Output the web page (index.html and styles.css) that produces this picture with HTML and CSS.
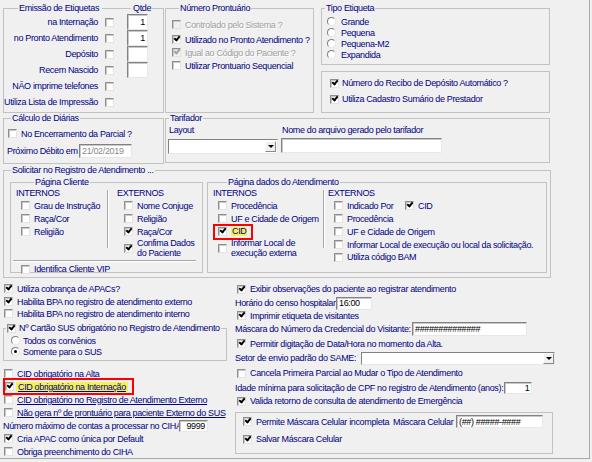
FILE: index.html
```html
<!DOCTYPE html>
<html lang="pt-BR">
<head>
    <meta charset="UTF-8">
    <title>Parâmetros de Atendimento</title>
    <link rel="stylesheet" href="styles.css">
</head>
<body>
<div class="form">
    <div class="upper">
        <div class="col-a">
            <fieldset class="group emissao">
                <legend class="lg-emissao"><span>Emissão de Etiquetas</span><span class="lg-line"></span><span>Qtde</span></legend>
                <div class="et-rows">
                    <div class="et-row"><span class="et-label">na Internação</span><span class="cb"></span><span class="edit num">1</span></div>
                    <div class="et-row"><span class="et-label">no Pronto Atendimento</span><span class="cb"></span><span class="edit num">1</span></div>
                    <div class="et-row"><span class="et-label">Depósito</span><span class="cb"></span><span class="edit num"></span></div>
                    <div class="et-row"><span class="et-label">Recem Nascido</span><span class="cb"></span><span class="edit num"></span></div>
                    <div class="et-row"><span class="et-label">NÃO imprime telefones</span><span class="cb"></span></div>
                    <div class="et-row"><span class="et-label">Utiliza Lista de Impressão</span><span class="cb"></span></div>
                </div>
            </fieldset>
            <fieldset class="group calculo">
                <legend class="lg-calculo">Cálculo de Diárias</legend>
                <div class="calc-body">
                    <div class="chk"><span class="cb"></span>No Encerramento da Parcial ?</div>
                    <div class="calc-row"><span class="calc-label">Próximo Débito em</span><span class="edit date">21/02/2019</span></div>
                </div>
            </fieldset>
        </div>
        <div class="col-r">
            <div class="row-top">
                <fieldset class="group prontuario">
                    <legend class="lg-prontuario">Número Prontuário</legend>
                    <div class="pr-body">
                        <div class="chk pr-first dis"><span class="cb dis"></span>Controlado pelo Sistema ?</div>
                        <div class="chk"><span class="cb on"></span>Utilizado no Pronto Atendimento ?</div>
                        <div class="chk dis"><span class="cb dis on"></span>Igual ao Código do Paciente ?</div>
                        <div class="chk"><span class="cb"></span>Utilizar Prontuario Sequencial</div>
                    </div>
                </fieldset>
                <div class="col-c">
                    <fieldset class="group tipo">
                        <legend class="lg-tipo">Tipo Etiqueta</legend>
                        <div class="tipo-body">
                            <div class="rad"><span class="rb"></span>Grande</div>
                            <div class="rad"><span class="rb"></span>Pequena</div>
                            <div class="rad"><span class="rb"></span>Pequena-M2</div>
                            <div class="rad"><span class="rb"></span>Expandida</div>
                        </div>
                    </fieldset>
                    <fieldset class="group recibo">
                        <div class="recibo-body">
                            <div class="chk"><span class="cb on"></span>Número do Recibo de Depósito Automático ?</div>
                            <div class="chk"><span class="cb on"></span>Utiliza Cadastro Sumário de Prestador</div>
                        </div>
                    </fieldset>
                </div>
            </div>
            <fieldset class="group tarifador">
                <legend class="lg-tarifador">Tarifador</legend>
                <div class="tar-body">
                    <span class="tar-label">Layout</span>
                    <span class="tar-label">Nome do arquivo gerado pelo tarifador</span>
                    <span class="combo"><span class="combo-btn"></span></span>
                    <span class="edit"></span>
                </div>
            </fieldset>
        </div>
    </div>

    <fieldset class="group solicitar">
        <legend class="lg-solicitar">Solicitar no Registro de Atendimento ...</legend>
        <div class="sol-body">
            <fieldset class="group pagina cliente">
                <legend class="lg-cliente">Página Cliente</legend>
                <div class="pg-body">
                    <div class="pg-cols">
                        <div class="pg-col cli-int">
                            <div class="hdr">INTERNOS</div>
                            <div class="sr in5"><span class="cb"></span>Grau de Instrução</div>
                            <div class="sr in5"><span class="cb"></span>Raça/Cor</div>
                            <div class="sr in5"><span class="cb"></span>Religião</div>
                        </div>
                        <div class="vsep"></div>
                        <div class="pg-col cli-ext">
                            <div class="hdr">EXTERNOS</div>
                            <div class="sr in7"><span class="cb"></span>Nome Conjuge</div>
                            <div class="sr in7"><span class="cb"></span>Religião</div>
                            <div class="sr in7"><span class="cb on"></span>Raça/Cor</div>
                            <div class="sr in7 two"><span class="cb on"></span><span>Confima Dados<br>do Paciente</span></div>
                        </div>
                    </div>
                    <div class="hline"></div>
                    <div class="sr in5 vip"><span class="cb"></span>Identifica Cliente VIP</div>
                </div>
            </fieldset>
            <fieldset class="group pagina dados">
                <legend class="lg-dados">Página dados do Atendimento</legend>
                <div class="pg-body">
                    <div class="pg-cols">
                        <div class="pg-col dad-int">
                            <div class="hdr">INTERNOS</div>
                            <div class="sr in5"><span class="cb"></span>Procedência</div>
                            <div class="sr in5"><span class="cb"></span>UF e Cidade de Origem</div>
                            <div class="sr in5"><span class="redbox cid-int"><span class="cb on"></span><span class="hl">CID</span></span></div>
                            <div class="sr in5 two"><span class="cb"></span><span>Informar Local de<br>execução externa</span></div>
                        </div>
                        <div class="vsep"></div>
                        <div class="pg-col dad-ext">
                            <div class="hdr">EXTERNOS</div>
                            <div class="sr in6"><span class="cb"></span><span class="ind-label">Indicado Por</span><span class="cb on"></span>CID</div>
                            <div class="sr in6"><span class="cb"></span>Procedência</div>
                            <div class="sr in6"><span class="cb"></span>UF e Cidade de Origem</div>
                            <div class="sr in6"><span class="cb"></span>Informar Local de execução ou local da solicitação.</div>
                            <div class="sr in6 short"><span class="cb"></span>Utiliza código BAM</div>
                        </div>
                    </div>
                </div>
            </fieldset>
        </div>
    </fieldset>

    <div class="lower">
        <div class="low-left">
            <div class="chk"><span class="cb on"></span>Utiliza cobrança de APACs?</div>
            <div class="chk"><span class="cb on"></span>Habilita BPA no registro de atendimento externo</div>
            <div class="chk h11"><span class="cb"></span>Habilita BPA no registro de atendimento interno</div>
            <fieldset class="group sus">
                <legend class="lg-sus"><span class="cb on"></span>Nº Cartão SUS obrigatório no Registro de Atendimento</legend>
                <div class="sus-body">
                    <div class="rad"><span class="rb"></span>Todos os convênios</div>
                    <div class="rad"><span class="rb on"></span>Somente para o SUS</div>
                </div>
            </fieldset>
            <div class="chk cid-first"><span class="cb"></span><span class="ul">CID obrigatório na Alta</span></div>
            <div class="chk"><span class="redbox cid-intern"><span class="cb on"></span><span class="hl ul">CID obrigatório na Internação</span></span></div>
            <div class="chk"><span class="cb"></span><span class="ul">CID obrigatório no Registro de Atendimento Externo</span></div>
            <div class="chk"><span class="cb"></span><span class="ul">Não gera nº de prontuário para paciente Externo do SUS</span></div>
            <div class="field"><span class="ciha-label">Número máximo de contas a processar no CIHA:</span><span class="edit num ciha">9999</span></div>
            <div class="chk"><span class="cb on"></span>Cria APAC como única por Default</div>
            <div class="chk"><span class="cb"></span>Obriga preenchimento do CIHA</div>
        </div>
        <div class="low-right">
            <div class="chk h14"><span class="cb on"></span>Exibir observações do paciente ao registrar atendimento</div>
            <div class="field h14"><span class="lbl-horario">Horário do censo hospitalar:</span><span class="edit hora">16:00</span></div>
            <div class="chk h11"><span class="cb on"></span>Imprimir etiqueta de visitantes</div>
            <div class="field h16"><span class="lbl-credencial">Máscara do Número da Credencial do Visitante:</span><span class="edit credencial">##############</span></div>
            <div class="chk"><span class="cb on"></span>Permitir digitação de Data/Hora no momento da Alta.</div>
            <div class="field h16"><span class="lbl-setor">Setor de envio padrão do SAME:</span><span class="combo setor"><span class="combo-btn"></span></span></div>
            <div class="chk h14"><span class="cb"></span>Cancela Primeira Parcial ao Mudar o Tipo de Atendimento</div>
            <div class="field h15"><span class="lbl-idade">Idade mínima para solicitação de CPF no registro de Atendimento (anos):</span><span class="edit num idade">1</span></div>
            <div class="chk h12"><span class="cb on"></span>Valida retorno de consulta de atendimento de Emergência</div>
            <fieldset class="group celular">
                <div class="cel-row">
                    <div class="chk cel-chk"><span class="cb on"></span>Permite Máscara Celular incompleta</div>
                    <span class="lbl-cel">Máscara Celular</span>
                    <span class="edit cel">(##) #####-####</span>
                </div>
                <div class="chk cel-second"><span class="cb on"></span>Salvar Máscara Celular</div>
            </fieldset>
        </div>
    </div>
</div>
</body>
</html>
```

FILE: styles.css
```css
* {
    box-sizing: border-box;
}
body {
    margin: 0;
    background-color: #f0f0f0;
    font-family: "Liberation Sans", Arial, sans-serif;
    font-size: 9px;
    letter-spacing: -0.35px;
    color: #000080;
}
.form {
    width: 590px;
    height: 459px;
    padding: 3px 0 0 3px;
    border-right: 1px solid #a8a8a8;
    border-bottom: 1px solid #a8a8a8;
}

/* group boxes */
.group {
    margin: 0;
    padding: 0;
    min-width: 0;
    border: 1px solid #c2c2c2;
}
legend {
    padding: 0 1px;
    height: 10px;
    line-height: 10px;
    white-space: nowrap;
}
.lg-line {
    display: inline-block;
    width: 29px;
    height: 1px;
    margin: 0 2px 0 3px;
    background-color: #c2c2c2;
}
.lg-emissao {
    display: flex;
    align-items: center;
    margin-left: 14px;
}
.lg-calculo { margin-left: 7px; }
.lg-prontuario { margin-left: 13px; }
.lg-tipo { margin-left: 3px; }
.lg-tarifador { margin-left: 3px; }
.lg-solicitar { margin-left: 7px; }
.lg-cliente { margin-left: 23px; }
.lg-dados { margin-left: 19px; }
.lg-sus {
    display: flex;
    align-items: center;
    gap: 3px;
    margin-left: 2px;
}

/* controls */
.cb {
    position: relative;
    display: inline-block;
    flex: none;
    width: 9px;
    height: 9px;
    background-color: #fff;
    border: 1px solid;
    border-color: #8e8e8e #e3e3e3 #e3e3e3 #8e8e8e;
    box-shadow: inset 1px 1px 0 #c9c9c9;
}
.cb.on::after {
    content: "";
    position: absolute;
    left: 1px;
    top: 0;
    width: 4px;
    height: 2px;
    border-left: 2px solid #000;
    border-bottom: 2px solid #000;
    transform: rotate(-50deg);
}
.cb.dis {
    background-color: #f0f0f0;
}
.cb.dis.on::after {
    border-color: #a0a0a0;
}
.rb {
    position: relative;
    display: inline-block;
    flex: none;
    width: 9px;
    height: 9px;
    border-radius: 50%;
    background-color: #fff;
    border: 1px solid;
    border-color: #7e7e7e #e6e6e6 #e6e6e6 #7e7e7e;
}
.rb.on::after {
    content: "";
    position: absolute;
    left: 2px;
    top: 2px;
    width: 3px;
    height: 3px;
    border-radius: 50%;
    background-color: #000;
}
.edit {
    display: flex;
    align-items: center;
    flex: none;
    background-color: #fff;
    border: 1px solid;
    border-color: #828282 #e8e8e8 #e8e8e8 #828282;
    box-shadow: inset 1px 1px 0 #c8c8c8;
    padding: 0 2px;
    color: #000;
    white-space: nowrap;
    overflow: hidden;
}
.edit.num {
    justify-content: flex-end;
}
.combo {
    display: flex;
    justify-content: flex-end;
    flex: none;
    padding: 1px;
    background-color: #fff;
    border: 1px solid;
    border-color: #828282 #e8e8e8 #e8e8e8 #828282;
}
.combo-btn {
    display: flex;
    align-items: center;
    justify-content: center;
    width: 11px;
    background-color: #f0f0f0;
    border: 1px solid;
    border-color: #fff #8a8a8a #8a8a8a #fff;
}
.combo-btn::after {
    content: "";
    border-left: 3px solid transparent;
    border-right: 3px solid transparent;
    border-top: 3px solid #000;
}
.chk {
    display: flex;
    align-items: center;
    gap: 4px;
    height: 13px;
    white-space: nowrap;
}
.rad {
    display: flex;
    align-items: center;
    gap: 5px;
    height: 11px;
    white-space: nowrap;
}
.field {
    display: flex;
    align-items: center;
    white-space: nowrap;
}
.dis {
    color: #a0a0a0;
    text-shadow: 1px 1px 0 #fff;
}
.ul {
    text-decoration: underline;
}
.hl {
    background-color: #f3f05a;
}
.redbox {
    display: inline-flex;
    align-items: center;
    flex: none;
    border: 2px solid #f00;
}

/* upper area */
.upper {
    display: flex;
    align-items: flex-start;
}
.col-a {
    width: 161px;
}
.emissao {
    height: 110px;
}
.et-rows {
    padding-top: 1px;
}
.et-row {
    display: flex;
    align-items: center;
    height: 16px;
}
.et-label {
    width: 96px;
    padding-right: 2px;
    text-align: right;
    white-space: nowrap;
}
.et-row .cb {
    margin-left: 5px;
}
.et-row .edit {
    margin-left: 13px;
    width: 21px;
    height: 16px;
}
.calculo {
    height: 51px;
}
.calc-body {
    padding: 4px 0 0 4px;
}
.calc-row {
    display: flex;
    align-items: center;
    height: 14px;
    margin: 4px 0 0 -1px;
}
.calc-label {
    width: 72px;
    white-space: nowrap;
}
.edit.date {
    width: 53px;
    height: 14px;
    color: #8a8a8a;
}
.col-r {
    width: 385px;
    margin-left: 1px;
}
.row-top {
    display: flex;
    align-items: flex-start;
}
.prontuario {
    width: 149px;
    height: 110px;
}
.pr-body {
    padding: 5px 0 0 6px;
}
.pr-first {
    margin-bottom: 2px;
}
.col-c {
    width: 229px;
    margin-left: 7px;
}
.tipo {
    height: 62px;
}
.tipo-body {
    padding: 3px 0 0 5px;
}
.recibo {
    height: 42px;
    margin-top: 6px;
}
.recibo-body {
    padding: 3px 0 0 8px;
}
.recibo .chk {
    height: 16px;
    gap: 3px;
}
.tarifador {
    height: 50px;
}
.tar-body {
    display: grid;
    grid-template-columns: 110px 161px;
    column-gap: 3px;
    padding: 2px 0 0 2px;
}
.tar-label {
    height: 10px;
    line-height: 10px;
    margin-bottom: 4px;
    padding-left: 1px;
    white-space: nowrap;
}
.tarifador .combo {
    height: 15px;
}
.tarifador .edit {
    height: 15px;
    margin-top: -1px;
}

/* solicitar no registro */
.solicitar {
    width: 548px;
    height: 113px;
    margin-top: 1px;
}
.sol-body {
    display: flex;
    gap: 4px;
    padding: 2px 0 0 6px;
}
.pagina {
    height: 96px;
}
.cliente {
    width: 193px;
}
.dados {
    width: 340px;
}
.pg-body {
    padding-left: 5px;
}
.pg-cols {
    display: flex;
    align-items: flex-start;
}
.cli-int {
    width: 91px;
}
.cli-ext {
    padding-left: 9px;
}
.dad-int {
    width: 110px;
}
.dad-ext {
    padding-left: 4px;
}
.vsep {
    width: 1px;
    height: 58px;
    margin-top: 3px;
    background-color: #a6a6a6;
    box-shadow: 1px 0 0 #fff;
}
.hdr {
    height: 12px;
    line-height: 12px;
    white-space: nowrap;
}
.sr {
    display: flex;
    align-items: center;
    gap: 4px;
    height: 13px;
    white-space: nowrap;
}
.sr.two {
    height: 20px;
    line-height: 10px;
}
.sr.short {
    height: 12px;
}
.in5 { padding-left: 5px; }
.in6 { padding-left: 6px; }
.in7 { padding-left: 7px; }
.ind-label {
    width: 54px;
}
.hline {
    width: 183px;
    height: 1px;
    margin: 2px 0 0 -3px;
    background-color: #a6a6a6;
    box-shadow: 0 1px 0 #fff;
}
.sr.vip {
    height: 10px;
    margin-top: 3px;
}
.cid-int {
    gap: 4px;
    height: 16px;
    margin: 0 -8px 0 -5px;
    padding: 0 4px 0 3px;
}
.cid-int .hl {
    padding: 0 1px;
    line-height: 9px;
}

/* lower area */
.lower {
    display: flex;
    margin-top: 4px;
}
.low-left {
    width: 227px;
}
.low-left > .chk {
    padding-left: 1px;
}
.h11 { height: 11px; }
.h12 { height: 12px; }
.h14 { height: 14px; }
.h15 { height: 15px; }
.h16 { height: 16px; }
.sus {
    width: 224px;
    height: 38px;
    margin-top: 4px;
}
.sus-body {
    padding: 2px 0 0 7px;
}
.sus .rad {
    gap: 3px;
}
.cid-first {
    margin-top: 6px;
}
.cid-intern {
    gap: 4px;
    height: 17px;
    margin: 0 -6px 0 -1px;
    padding: 0 4px 0 0;
}
.cid-intern .hl {
    padding: 0 2px;
    margin-left: -2px;
    line-height: 10px;
}
.low-left .field {
    height: 13px;
}
.ciha-label {
    width: 176px;
}
.edit.ciha {
    width: 29px;
    height: 12px;
}
.low-right {
    width: 323px;
    margin-left: 5px;
}
.low-right > .chk {
    padding-left: 2px;
}
.lbl-horario { width: 101px; }
.edit.hora {
    width: 36px;
    height: 13px;
}
.lbl-credencial { width: 177px; }
.edit.credencial {
    width: 115px;
    height: 14px;
}
.lbl-setor { width: 126px; }
.combo.setor {
    width: 194px;
    height: 13px;
    padding: 0;
}
.lbl-idade {
    margin-right: 1px;
}
.edit.idade {
    width: 28px;
    height: 12px;
}
.celular {
    width: 318px;
    height: 42px;
    margin-top: 5px;
    padding: 2px 0 0 7px;
}
.cel-row {
    display: flex;
    align-items: center;
    height: 13px;
}
.cel-chk {
    width: 150px;
}
.lbl-cel {
    width: 63px;
    white-space: nowrap;
}
.edit.cel {
    width: 87px;
    height: 13px;
}
.cel-second {
    height: 12px;
    margin-top: 5px;
}
```
